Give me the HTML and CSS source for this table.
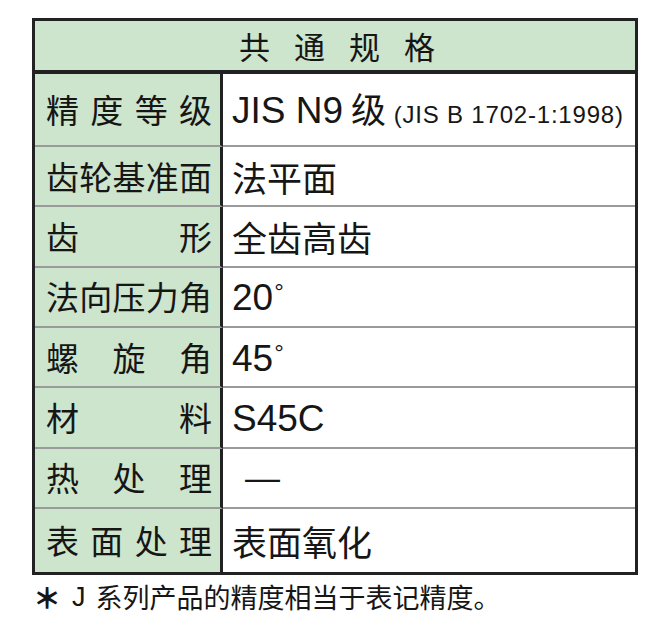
FILE: index.html
```html
<!DOCTYPE html>
<html lang="zh-CN">
<head>
<meta charset="utf-8">
<title>共通规格</title>
<link rel="stylesheet" href="styles.css">
</head>
<body>
<div class="page">
  <div class="spec">
    <div class="head"><span>共</span><span>通</span><span>规</span><span>格</span></div>

    <div class="label"><span>精</span><span>度</span><span>等</span><span>级</span></div>
    <div class="value"><span class="v"><span class="lat">JIS N9</span> 级 <span class="small">(JIS B 1702-1:1998)</span></span></div>

    <div class="label"><span>齿</span><span>轮</span><span>基</span><span>准</span><span>面</span></div>
    <div class="value"><span class="v">法平面</span></div>

    <div class="label"><span>齿</span><span>形</span></div>
    <div class="value"><span class="v">全齿高齿</span></div>

    <div class="label"><span>法</span><span>向</span><span>压</span><span>力</span><span>角</span></div>
    <div class="value"><span class="v"><span class="lat">20</span><span class="deg">°</span></span></div>

    <div class="label"><span>螺</span><span>旋</span><span>角</span></div>
    <div class="value"><span class="v"><span class="lat">45</span><span class="deg">°</span></span></div>

    <div class="label"><span>材</span><span>料</span></div>
    <div class="value"><span class="v"><span class="lat">S45C</span></span></div>

    <div class="label"><span>热</span><span>处</span><span>理</span></div>
    <div class="value"><span class="v dash">—</span></div>

    <div class="label last"><span>表</span><span>面</span><span>处</span><span>理</span></div>
    <div class="value last"><span class="v">表面氧化</span></div>
  </div>
  <p class="note"><span class="ast">＊</span><span class="nj">J</span>系列产品的精度相当于表记精度。</p>
</div>
</body>
</html>
```

FILE: styles.css
```css
html, body {
  margin: 0;
  background: #ffffff;
}

body {
  color: #161616;
  font-family: "Noto Sans CJK SC", "Noto Sans", sans-serif;
}

.page {
  padding: 18px 0 0 32px;
}

.spec {
  width: 606px;
  box-sizing: border-box;
  border: 3px solid #222;
  display: grid;
  grid-template-columns: 188px 1fr;
  grid-template-rows: 53px 73px repeat(6, 60.33px) 63px;
}

.head {
  grid-column: 1 / 3;
  background: #cde4cd;
  border-bottom: 4px solid #222;
  display: flex;
  justify-content: center;
  align-items: center;
  gap: 24px;
  font-size: 31px;
  line-height: 1;
  padding-left: 4px;
}

.label {
  background: #cde4cd;
  border-right: 3px solid #222;
  border-bottom: 2px solid #9a9a9a;
  display: flex;
  justify-content: space-between;
  align-items: center;
  padding: 0 8px 0 11px;
  font-size: 33px;
  line-height: 1;
}

.value {
  border-bottom: 2px solid #9a9a9a;
  display: flex;
  align-items: center;
  padding-left: 9px;
  font-size: 35px;
  line-height: 1;
  white-space: nowrap;
}

.last {
  border-bottom: none;
}

.lat {
  font-family: "Liberation Sans", Arial, sans-serif;
  font-size: 37px;
}

.small {
  font-family: "Liberation Sans", Arial, sans-serif;
  font-size: 24px;
  letter-spacing: 0.8px;
}

.deg {
  font-family: "Liberation Sans", Arial, sans-serif;
  font-size: 24px;
  vertical-align: 10px;
  margin-left: 1px;
}

.dash {
  font-family: "Liberation Sans", Arial, sans-serif;
  font-size: 35px;
  padding-left: 13px;
}

.note {
  margin: 7px 0 0 0;
  font-size: 27px;
  line-height: 30px;
  display: flex;
  align-items: center;
}

.ast {
  font-weight: 900;
  font-size: 28px;
  width: 30px;
  text-align: center;
}

.nj {
  font-family: "Liberation Sans", Arial, sans-serif;
  margin: 0 10px 0 10px;
}
```
